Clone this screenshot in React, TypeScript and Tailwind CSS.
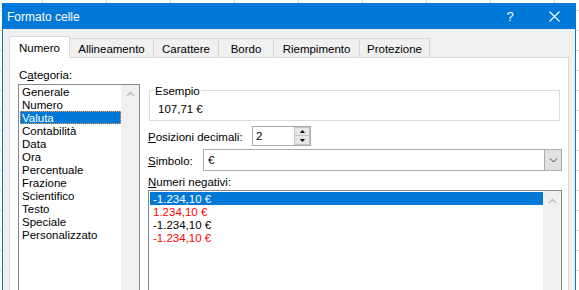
import React from "react";

const categories = [
  "Generale",
  "Numero",
  "Valuta",
  "Contabilità",
  "Data",
  "Ora",
  "Percentuale",
  "Frazione",
  "Scientifico",
  "Testo",
  "Speciale",
  "Personalizzato",
];

const negatives = [
  { t: "-1.234,10 €", c: "text-white", sel: true },
  { t: "1.234,10 €", c: "text-[#ff0000]", sel: false },
  { t: "-1.234,10 €", c: "text-black", sel: false },
  { t: "-1.234,10 €", c: "text-[#ff0000]", sel: false },
];

function ScrollUp() {
  return (
    <svg width="9" height="6" viewBox="0 0 9 6">
      <path d="M1 5 L4.5 1.5 L8 5" stroke="#c2c2c2" strokeWidth="1.6" fill="none" />
    </svg>
  );
}

export default function App() {
  return (
    <div className="w-[579px] h-[290px] overflow-hidden bg-white bg-[linear-gradient(to_right,#dadada_1px,transparent_1px),linear-gradient(to_bottom,#dadada_1px,transparent_1px)] bg-[size:64px_20px] bg-[position:42px_10px] pt-[3px] pl-[2px] font-['Liberation_Sans',Arial,sans-serif] text-[11.5px] leading-[16px] text-black">
      <div className="w-[574px] h-[310px] border border-[#0078d7] bg-[#f0f0f0] flex flex-col">
        {/* Title bar */}
        <div className="h-[25px] shrink-0 bg-[#0078d7] flex items-center text-white pl-[4px] text-[12px]">
          <span className="flex-1">Formato celle</span>
          <span className="w-[46px] text-center text-[13px]">?</span>
          <span className="w-[42px] flex justify-center">
            <svg width="11" height="11" viewBox="0 0 11 11">
              <path d="M0.5 0.5 L10.5 10.5 M10.5 0.5 L0.5 10.5" stroke="#ffffff" strokeWidth="1.1" />
            </svg>
          </span>
        </div>

        {/* Body */}
        <div className="flex-1 flex flex-col px-[6px] pt-[7px]">
          {/* Tabs */}
          <div className="flex items-end h-[21px] shrink-0">
            <div className="relative z-10 w-[61px] h-[22px] -mb-[1px] bg-white border-l border-t border-r border-[#d9d9d9] flex items-center justify-center pt-[1px]">
              Numero
            </div>
            <div className="w-[84px] h-[19px] border-t border-r border-[#d9d9d9] flex items-center justify-center pt-[1px]">
              Allineamento
            </div>
            <div className="w-[65px] h-[19px] border-t border-r border-[#d9d9d9] flex items-center justify-center pt-[1px]">
              Carattere
            </div>
            <div className="w-[55px] h-[19px] border-t border-r border-[#d9d9d9] flex items-center justify-center pt-[1px]">
              Bordo
            </div>
            <div className="w-[86px] h-[19px] border-t border-r border-[#d9d9d9] flex items-center justify-center pt-[1px]">
              Riempimento
            </div>
            <div className="w-[70px] h-[19px] border-t border-r border-[#d9d9d9] flex items-center justify-center pt-[1px]">
              Protezione
            </div>
          </div>

          {/* Panel */}
          <div className="flex-1 bg-white border border-[#d9d9d9] flex pl-[8px] pr-[6px] pt-[8px] gap-[8px]">
            {/* Left column */}
            <div className="w-[122px] flex flex-col">
              <div className="h-[16px] pl-[1px] pt-[1px]">
                C<span className="underline">a</span>tegoria:
              </div>
              <div className="mt-[2px] flex-1 border border-[#828790] flex">
                <div className="flex-1 pl-[1px] flex flex-col">
                  {categories.map((c) => (
                    <div
                      key={c}
                      className={
                        c === "Valuta"
                          ? "h-[13px] leading-[13px] pl-[2px] pt-[0.5px] whitespace-nowrap bg-[#0078d7] text-white outline-1 outline-dotted outline-[#ff9a3c] -outline-offset-1"
                          : "h-[13px] leading-[13px] pl-[2px] pt-[0.5px] whitespace-nowrap"
                      }
                    >
                      {c}
                    </div>
                  ))}
                </div>
                <div className="w-[18px] bg-[#f0f0f0] flex flex-col items-center pt-[6px]">
                  <ScrollUp />
                </div>
              </div>
            </div>

            {/* Right column */}
            <div className="flex-1 flex flex-col pt-[24px]">
              <div className="relative ml-[1px] w-[411px] h-[31px] border border-[#dcdcdc] pl-[8px] pt-[10px] shrink-0">
                <span className="absolute left-[4px] -top-[8px] px-[1px] bg-white">Esempio</span>
                <div>107,71 €</div>
              </div>

              <div className="mt-[5px] h-[20px] flex items-center shrink-0">
                <div className="w-[104px] pt-[1px]">
                  <span className="underline">P</span>osizioni decimali:
                </div>
                <div className="w-[59px] h-[20px] border border-[#acacac] flex">
                  <div className="flex-1 pl-[3px] flex items-center">2</div>
                  <div className="w-[16px] flex flex-col">
                    <div className="h-[9px] bg-[#e6e6e6] border border-[#c4c4c4] flex items-center justify-center">
                      <svg width="5" height="3" viewBox="0 0 5 3">
                        <path d="M0 3 L2.5 0 L5 3 Z" fill="#000000" />
                      </svg>
                    </div>
                    <div className="h-[9px] bg-[#e6e6e6] border border-t-0 border-[#c4c4c4] flex items-center justify-center">
                      <svg width="5" height="3" viewBox="0 0 5 3">
                        <path d="M0 0 L2.5 3 L5 0 Z" fill="#000000" />
                      </svg>
                    </div>
                  </div>
                </div>
              </div>

              <div className="mt-[3px] h-[22px] flex items-center shrink-0">
                <div className="w-[55px] pt-[1px]">
                  <span className="underline">S</span>imbolo:
                </div>
                <div className="flex-1 h-[22px] border border-[#adadad] flex">
                  <div className="flex-1 pl-[4px] flex items-center">€</div>
                  <div className="w-[17px] bg-[#e1e1e1] border-l border-[#adadad] flex items-center justify-center">
                    <svg width="9" height="6" viewBox="0 0 9 6">
                      <path d="M1 1.5 L4.5 5 L8 1.5" stroke="#404040" strokeWidth="1" fill="none" />
                    </svg>
                  </div>
                </div>
              </div>

              <div className="mt-[2px] h-[16px] shrink-0 pt-[1px]">
                <span className="underline">N</span>umeri negativi:
              </div>

              <div className="mt-[1px] flex-1 border border-[#828790] flex">
                <div className="flex-1 pl-[1px] pt-[1px] flex flex-col">
                  {negatives.map((n, i) => (
                    <div
                      key={i}
                      className={
                        n.sel
                          ? "h-[13px] leading-[13px] pl-[3px] pt-[0.5px] whitespace-nowrap bg-[#0078d7] text-white"
                          : `h-[13px] leading-[13px] pl-[3px] pt-[0.5px] whitespace-nowrap ${n.c}`
                      }
                    >
                      {n.t}
                    </div>
                  ))}
                </div>
                <div className="w-[18px] bg-[#f0f0f0] flex flex-col items-center pt-[7px]">
                  <ScrollUp />
                </div>
              </div>
            </div>
          </div>
        </div>
      </div>
    </div>
  );
}
